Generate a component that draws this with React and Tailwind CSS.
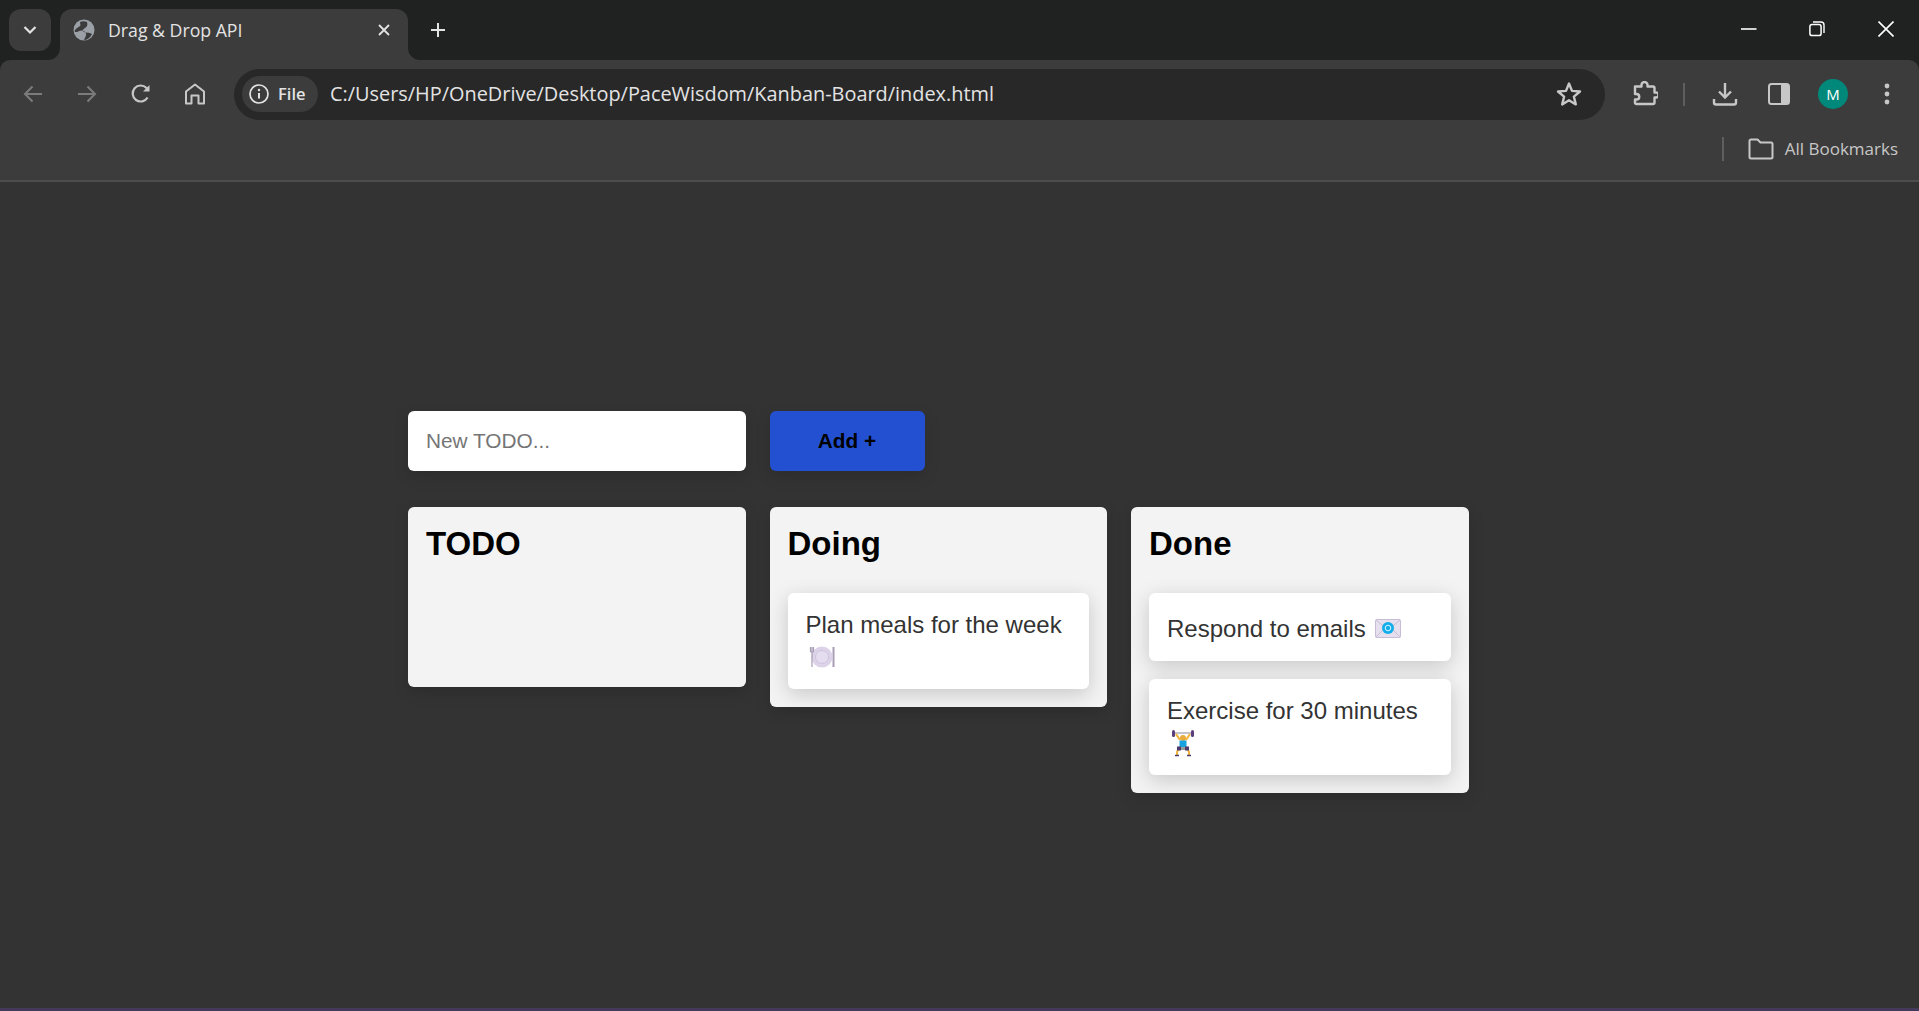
import React from "react";

const Ico = ({ w = 24, h = 24, vb = "0 0 24 24", children, cls = "" }) => (
  <svg width={w} height={h} viewBox={vb} fill="none" className={"shrink-0 " + cls}>{children}</svg>
);

const Slot = ({ w, children, cls = "" }) => (
  <div className={"flex items-center justify-center shrink-0 " + cls} style={{ width: w }}>{children}</div>
);

function TopBar() {
  return (
    <div className="h-[60px] shrink-0 bg-[#202221] flex items-start pt-[9px] pl-[9px]">
      <div className="w-[42px] h-[42px] rounded-[12px] bg-[#3c3c3c] flex items-center justify-center">
        <Ico w={14} h={10} vb="0 0 14 10"><path d="M1.5 2 7 7.5 12.5 2" stroke="#e3e3e3" strokeWidth="2.2" /></Ico>
      </div>
      <div className="relative ml-[9px] w-[348px] h-[51px] rounded-t-[12px] bg-[#3c3c3c] flex items-center pl-[13px] pb-[9px]">
        <svg width="12" height="12" viewBox="0 0 12 12" className="absolute left-[-12px] bottom-0"><path d="M12 0v12H0A12 12 0 0 0 12 0Z" fill="#3c3c3c" /></svg>
        <svg width="12" height="12" viewBox="0 0 12 12" className="absolute right-[-12px] bottom-0"><path d="M0 0v12h12A12 12 0 0 1 0 0Z" fill="#3c3c3c" /></svg>
        <Ico w={22} h={22} vb="0 0 22 22">
          <circle cx="11" cy="11" r="10.5" fill="#9aa0a6" />
          <path d="M4 13c3-2 6-2 8 0s1 4-1 8c3 0 6-2 8-6-3-2-6-1-8-2s-1-3 1-4 3-3 2-6c-2-1-5-1-7 0 0 2 1 3 0 4s-4 2-5 4 0 2 2 2Z" fill="#3c3c3c" />
        </Ico>
        <span className="ml-[13px] text-[17.700px] leading-[22px] text-[#e3e3e3] whitespace-nowrap">Drag &amp; Drop API</span>
        <div className="ml-auto mr-[17px]">
          <Ico w={14} h={14} vb="0 0 14 14"><path d="M2 2l10 10M12 2 2 12" stroke="#e3e3e3" strokeWidth="1.8" /></Ico>
        </div>
      </div>
      <div className="ml-[22px] h-[42px] flex items-center">
        <Ico w={16} h={16} vb="0 0 16 16"><path d="M8 1v14M1 8h14" stroke="#e3e3e3" strokeWidth="2" /></Ico>
      </div>
      <div className="ml-auto h-[40px] flex items-center pr-[25px]">
        <Ico w={16} h={4} vb="0 0 16 4"><path d="M0 2h15.500" stroke="#fff" strokeWidth="1.600" /></Ico>
        <Ico w={16} h={16} vb="0 0 16 16" cls="ml-[52px]">
          <rect x="0.900" y="3.400" width="11.200" height="11.200" rx="2.200" stroke="#fff" strokeWidth="1.500" />
          <path d="M4 1h8a3 3 0 0 1 3 3v8" stroke="#fff" strokeWidth="1.400" />
        </Ico>
        <Ico w={16} h={16} vb="0 0 16 16" cls="ml-[53px]"><path d="M.5.5l15 15M15.500.5l-15 15" stroke="#fff" strokeWidth="1.600" /></Ico>
      </div>
    </div>
  );
}

function Toolbar() {
  const c = "#c7c7c7";
  return (
    <div className="shrink-0 bg-[#3c3c3c] rounded-t-[10px] border-b-2 border-[#4d4d4d] h-[122px] flex flex-col">
      <div className="h-[68px] flex items-center">
        <Slot w={66}>
          <Ico w={20} h={20} vb="0 0 20 20"><path d="M19 10H2M9.500 2.500 2 10l7.500 7.500" stroke="#7b7b7b" strokeWidth="2" /></Ico>
        </Slot>
        <Slot w={42}>
          <Ico w={20} h={20} vb="0 0 20 20"><path d="M1 10h17M10.500 2.500 18 10l-7.500 7.500" stroke="#7b7b7b" strokeWidth="2" /></Ico>
        </Slot>
        <Slot w={66}>
          <Ico w={20} h={20} vb="0 0 20 20">
            <path d="M16.600 13.500A8 8 0 1 1 15.500 4l1.500 1.500" stroke={c} strokeWidth="2.200" />
            <path d="M18.500 1v6.500H12z" fill={c} />
          </Ico>
        </Slot>
        <Slot w={42}>
          <Ico w={22} h={22} vb="0 0 22 22"><path d="M2 20.500V8.500L11 1.500l9 7v12h-5.500v-8h-7v8Z" stroke={c} strokeWidth="2" strokeLinejoin="round" /></Ico>
        </Slot>
        <div className="ml-[18px] w-[1371px] h-[51px] rounded-full bg-[#282828] flex items-center pl-[8px] pr-[23px]">
          <div className="h-[36px] w-[76px] rounded-full bg-[#3c3c3c] flex items-center pl-[7px]">
            <Ico w={20} h={20} vb="0 0 20 20">
              <circle cx="10" cy="10" r="9" stroke="#e3e3e3" strokeWidth="1.700" />
              <path d="M10 9v5.500" stroke="#e3e3e3" strokeWidth="2" />
              <circle cx="10" cy="6" r="1.200" fill="#e3e3e3" />
            </Ico>
            <span className="ml-[9px] text-[16.500px] font-semibold text-[#e3e3e3]">File</span>
          </div>
          <span className="ml-[12px] text-[19.900px] text-[#e3e3e3] whitespace-nowrap">C:/Users/HP/OneDrive/Desktop/PaceWisdom/Kanban-Board/index.html</span>
          <div className="ml-auto">
            <Ico w={26} h={26} vb="0 0 26 26"><path d="M13 2.500l3 7.400 8 .6-6.100 5.100 1.900 7.800L13 19.200 6.200 23.400l1.900-7.800L2 10.500l8-.6z" stroke={c} strokeWidth="2.400" strokeLinejoin="round" /></Ico>
          </div>
        </div>
        <Slot w={40} cls="ml-[20px]">
          <Ico w={26} h={26} vb="0 0 26 26"><path d="M3 5.500h6.500V4a3 3 0 0 1 6 0v1.500H21a1.500 1.500 0 0 1 1.500 1.500v4.500H24a2.500 2.500 0 0 1 0 5h-1.500v5a1.500 1.500 0 0 1-1.500 1.500H4.500A1.500 1.500 0 0 1 3 22v-3.500h1.500a2.500 2.500 0 0 0 0-5.500H3Z" stroke={c} strokeWidth="2.400" strokeLinejoin="round" /></Ico>
        </Slot>
        <div className="ml-[18px] w-[2px] h-[23px] bg-[#5e5e5e]" />
        <Slot w={26} cls="ml-[27px]">
          <Ico w={26} h={26} vb="0 0 26 26"><path d="M13 2v14M7 10.500l6 6 6-6" stroke={c} strokeWidth="2.400" /><path d="M2 18v3.500a2 2 0 0 0 2 2h18a2 2 0 0 0 2-2V18" stroke={c} strokeWidth="2.400" /></Ico>
        </Slot>
        <Slot w={24} cls="ml-[29px]">
          <Ico w={22} h={22} vb="0 0 22 22"><rect x="1" y="1" width="20" height="20" rx="2.500" stroke={c} strokeWidth="2" /><path d="M13 1h6a2 2 0 0 1 2 2v16a2 2 0 0 1-2 2h-6Z" fill={c} /></Ico>
        </Slot>
        <div className="ml-[27px] w-[30px] h-[30px] rounded-full bg-[#00897b] flex items-center justify-center text-[15px] text-white">M</div>
        <Slot w={6} cls="ml-[36px]">
          <Ico w={6} h={22} vb="0 0 6 22"><circle cx="3" cy="3" r="2.400" fill={c} /><circle cx="3" cy="11" r="2.400" fill={c} /><circle cx="3" cy="19" r="2.400" fill={c} /></Ico>
        </Slot>
      </div>
      <div className="flex-1 flex items-center justify-end pr-[21px] pb-[10px]">
        <div className="w-[2px] h-[24px] bg-[#5e5e5e]" />
        <Ico w={26} h={22} vb="0 0 26 22" cls="ml-[24px]"><path d="M1.500 3a1.500 1.500 0 0 1 1.500-1.500h6.500l3 3H23a1.500 1.500 0 0 1 1.500 1.500v13a1.500 1.500 0 0 1-1.500 1.500H3A1.500 1.500 0 0 1 1.500 19Z" stroke={c} strokeWidth="2" strokeLinejoin="round" /></Ico>
        <span className="ml-[11px] text-[17px] text-[#c7c7c7] whitespace-nowrap">All Bookmarks</span>
      </div>
    </div>
  );
}

const Plate = () => (
  <svg width="32" height="32" viewBox="0 0 32 32" className="inline-block align-[-6px]">
    <path d="M27.500 8v20" stroke="#a79db5" strokeWidth="2" />
    <circle cx="16" cy="18" r="10.500" fill="#dcd3e8" />
    <circle cx="16" cy="18" r="6.500" fill="#e4ddef" stroke="#cfc4de" strokeWidth="1" />
    <path d="M4.500 8v5M6 8v5M7.500 8v5M4.500 13h3M6 13v15" stroke="#a79db5" strokeWidth="1.200" />
  </svg>
);

const Mail = () => (
  <svg width="32" height="32" viewBox="0 0 32 32" className="inline-block align-[-6px]">
    <rect x="3.500" y="8.500" width="25" height="18" rx="1" fill="#e6dfee" stroke="#c8bdd6" />
    <path d="M4 9l12 10L28 9M4 26l9-9M28 26l-9-9" stroke="#c8bdd6" strokeWidth="1" fill="none" />
    <circle cx="16" cy="17" r="6" fill="#12aeea" />
    <circle cx="16" cy="17" r="2.800" fill="none" stroke="#dff5ff" strokeWidth="1" />
  </svg>
);

const Lifter = () => (
  <svg width="32" height="32" viewBox="0 0 32 32" className="inline-block align-[-6px]">
    <path d="M7 8h18" stroke="#8d8598" strokeWidth="1" />
    <rect x="5" y="5" width="3" height="7" rx="1.500" fill="#5b3f7c" />
    <rect x="24" y="5" width="3" height="7" rx="1.500" fill="#5b3f7c" />
    <path d="M9 9l4 6M23 9l-4 6" stroke="#f2b63c" strokeWidth="2.200" />
    <circle cx="16" cy="13" r="3" fill="#e8ac3c" />
    <rect x="12.500" y="15.500" width="7" height="7" fill="#17a2e0" />
    <rect x="12" y="22" width="8" height="3" fill="#9b9b9b" />
    <path d="M12 23l-2 4v3M20 23l2 4v3" stroke="#f2b63c" strokeWidth="2" fill="none" />
    <rect x="10" y="21.500" width="4" height="4" fill="#4d3a6b" />
    <rect x="18" y="21.500" width="4" height="4" fill="#4d3a6b" />
    <path d="M8 30.500h4M20 30.500h4" stroke="#4d3a6b" strokeWidth="1.500" />
  </svg>
);

const Card = ({ children }) => (
  <div className="bg-white rounded-[6px] p-[18px] text-[24px] leading-[28px] text-[#333333] shadow-[0_5px_20px_rgba(0,0,0,0.18)]">{children}</div>
);

const Column = ({ title, children }) => (
  <div className="w-[337.500px] min-h-[180px] bg-[#f3f3f3] rounded-[6px] p-[18px] shadow-[0_5px_15px_rgba(0,0,0,0.15)]">
    <h2 className="text-[33px] font-bold text-black h-[37px] leading-[37px] mb-[31px]">{title}</h2>
    <div className="flex flex-col gap-[18px]">{children}</div>
  </div>
);

export default function App() {
  return (
    <div className="h-[1011px] flex flex-col overflow-hidden bg-[#202221] font-['Open_Sans',sans-serif]">
      <TopBar />
      <Toolbar />
      <main className="flex-1 bg-[#333333] border-b-[3px] border-[#43395a] pt-[229px] pl-[408px] font-['Liberation_Sans',Arial,sans-serif]">
        <div className="flex gap-[24px] items-start">
          <input
            placeholder="New TODO..."
            className="w-[337.500px] h-[60px] bg-white rounded-[6px] px-[18px] text-[20.800px] text-[#333333] placeholder:text-[#757575] outline-none shadow-[0_5px_15px_rgba(0,0,0,0.15)]"
          />
          <button className="w-[155px] h-[60px] bg-[#2350d1] rounded-[6px] text-[20.800px] font-bold text-black shadow-[0_5px_15px_rgba(0,0,0,0.15)]">Add +</button>
        </div>
        <div className="flex gap-[24px] items-start mt-[36px]">
          <Column title="TODO" />
          <Column title="Doing">
            <Card>Plan meals for the week <Plate /></Card>
          </Column>
          <Column title="Done">
            <Card>Respond to emails <Mail /></Card>
            <Card>Exercise for 30 minutes <Lifter /></Card>
          </Column>
        </div>
      </main>
    </div>
  );
}
